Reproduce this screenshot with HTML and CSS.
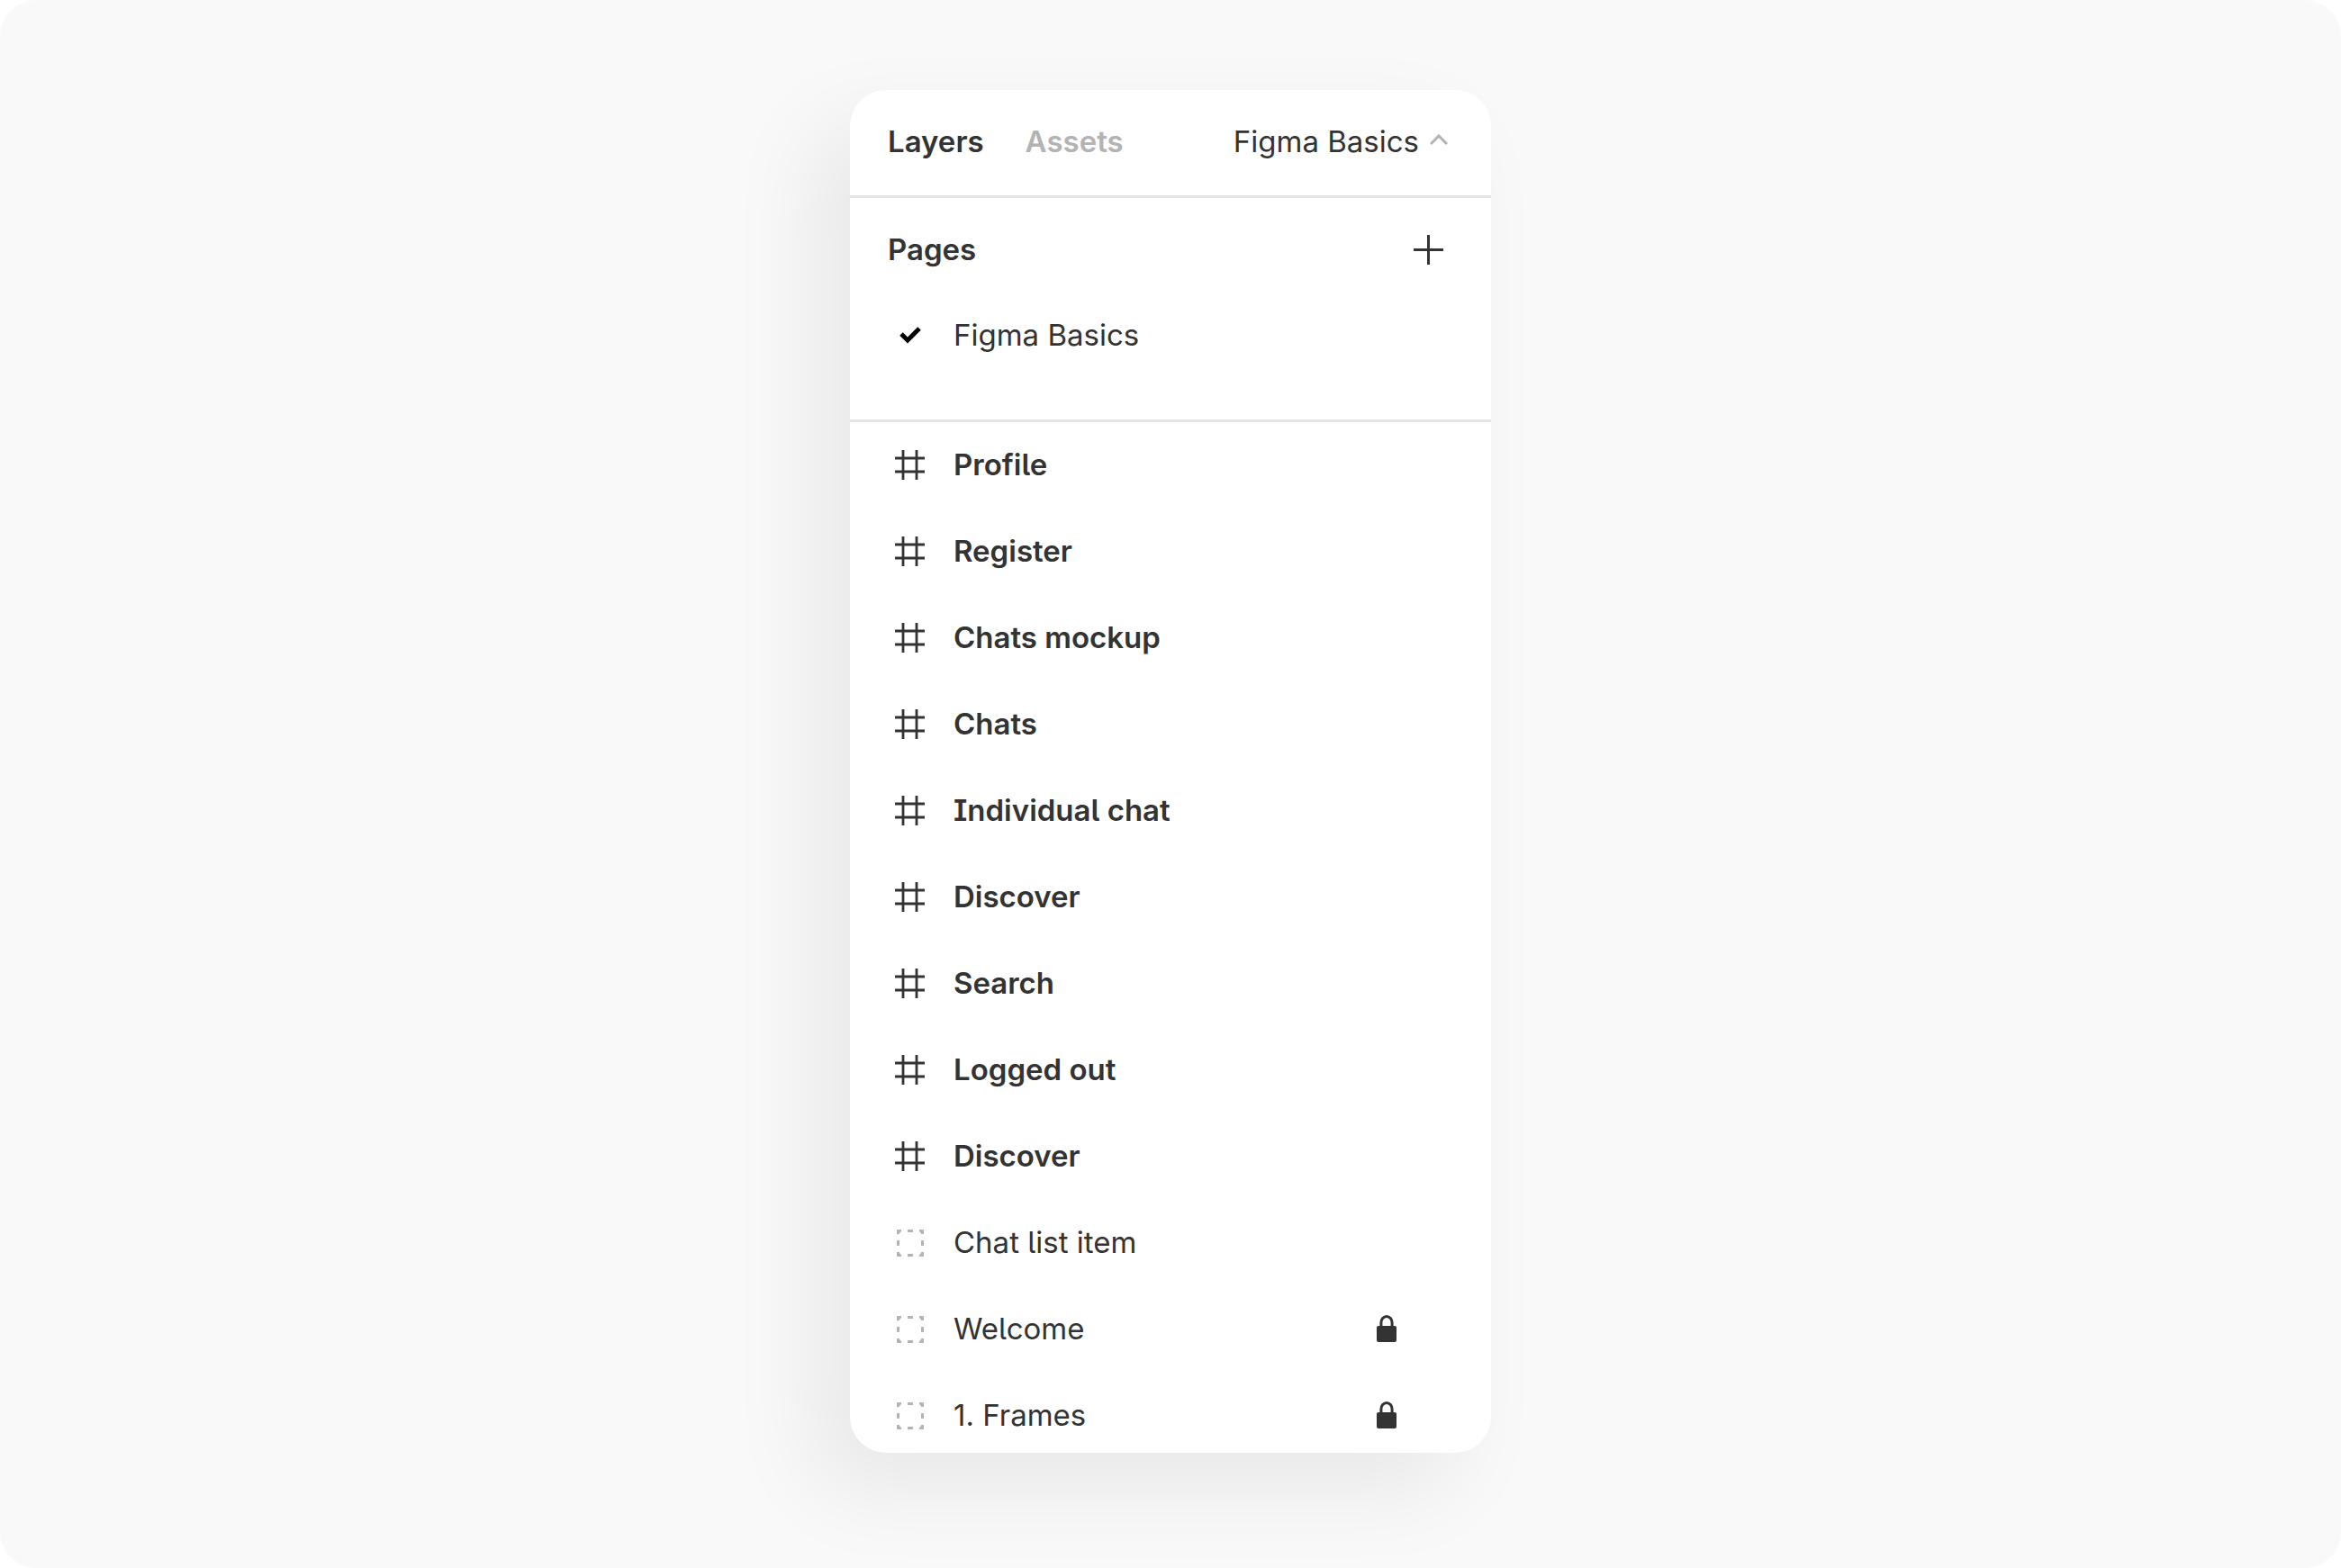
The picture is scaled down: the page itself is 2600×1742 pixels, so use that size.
FILE: index.html
```html
<!DOCTYPE html>
<html lang="en">
<head>
<meta charset="utf-8">
<title>Layers panel</title>
<link rel="stylesheet" href="styles.css">
</head>
<body>
<svg class="sprite" aria-hidden="true">
  <symbol id="frame" viewBox="0 0 33 33"><path d="M9 0v33M24 0v33M0 9h33M0 24h33" fill="none" stroke="currentColor" stroke-width="2.800"/></symbol>
  <symbol id="group" viewBox="0 0 33 33"><path d="M2 2h5v2l-2 2v1H2zM32 2h-5v2l2 2v1h3zM2 32h5v-2l-2-2v-1H2zM32 32h-5v-2l2-2v-1h3zM14 2h6v3h-6zM14 29h6v3h-6zM2 14h3v6H2zM29 14h3v6h-3z" fill="currentColor"/></symbol>
  <symbol id="check" viewBox="0 0 33 33"><path d="M7 15l7 7L27 9" fill="none" stroke="currentColor" stroke-width="5"/></symbol>
  <symbol id="lock" viewBox="0 0 22 30"><path d="M4.900 14V8.500a6.100 7 0 0 1 12.200 0V14" fill="none" stroke="currentColor" stroke-width="3"/><rect y="12" width="22" height="18" rx="2" fill="currentColor"/></symbol>
</svg>
<main class="stage">
  <section class="panel" aria-label="Layers panel">
    <header class="header">
      <button class="tab tab-active" type="button">Layers</button>
      <button class="tab" type="button">Assets</button>
      <button class="page-toggle" type="button">Figma Basics
        <svg class="chevron" viewBox="0 0 20 16" aria-hidden="true"><path d="M1 11l9-9 9 9" fill="none" stroke="currentColor" stroke-width="3"/></svg>
      </button>
    </header>
    <section class="pages">
      <div class="pages-head">
        <h2 class="title">Pages</h2>
        <button class="add" type="button" aria-label="Add page">
          <svg class="icon" viewBox="0 0 33 33" aria-hidden="true"><path d="M16.500 0v33M0 16.500h33" fill="none" stroke="currentColor" stroke-width="3"/></svg>
        </button>
      </div>
      <ul class="list">
        <li class="row"><svg class="icon icon-check"><use href="#check"/></svg><span>Figma Basics</span></li>
      </ul>
    </section>
    <ul class="list layers">
      <li class="row row-frame"><svg class="icon"><use href="#frame"/></svg><span>Profile</span></li>
      <li class="row row-frame"><svg class="icon"><use href="#frame"/></svg><span>Register</span></li>
      <li class="row row-frame"><svg class="icon"><use href="#frame"/></svg><span>Chats mockup</span></li>
      <li class="row row-frame"><svg class="icon"><use href="#frame"/></svg><span>Chats</span></li>
      <li class="row row-frame"><svg class="icon"><use href="#frame"/></svg><span>Individual chat</span></li>
      <li class="row row-frame"><svg class="icon"><use href="#frame"/></svg><span>Discover</span></li>
      <li class="row row-frame"><svg class="icon"><use href="#frame"/></svg><span>Search</span></li>
      <li class="row row-frame"><svg class="icon"><use href="#frame"/></svg><span>Logged out</span></li>
      <li class="row row-frame"><svg class="icon"><use href="#frame"/></svg><span>Discover</span></li>
      <li class="row"><svg class="icon icon-group"><use href="#group"/></svg><span>Chat list item</span></li>
      <li class="row"><svg class="icon icon-group"><use href="#group"/></svg><span>Welcome</span><button class="lock" type="button" aria-label="Unlock Welcome"><svg class="lock-icon"><use href="#lock"/></svg></button></li>
      <li class="row"><svg class="icon icon-group"><use href="#group"/></svg><span>1. Frames</span><button class="lock" type="button" aria-label="Unlock 1. Frames"><svg class="lock-icon"><use href="#lock"/></svg></button></li>
    </ul>
  </section>
</main>
</body>
</html>
```
FILE: styles.css
```css
* {
  box-sizing: border-box;
}

body {
  margin: 0;
  background: #fff;
  color: #333;
  font: 400 33px/48px Inter, "Liberation Sans", sans-serif;
  font-feature-settings: "cv05", "cv08";
}

button {
  padding: 0;
  border: 0;
  background: none;
  color: inherit;
  font: inherit;
  font-feature-settings: inherit;
  cursor: pointer;
}

svg {
  display: block;
  flex: none;
}

.sprite {
  position: absolute;
  width: 0;
  height: 0;
}

.stage {
  display: flex;
  justify-content: center;
  min-height: 100vh;
  padding: 100px 24px 128px;
  border-radius: 40px;
  background: #f9f9f9;
}

.panel {
  display: flex;
  flex-direction: column;
  width: 100%;
  max-width: 712px;
  max-height: calc(100vh - 228px);
  overflow: hidden;
  border-radius: 40px;
  background: #fff;
  box-shadow: -40px 40px 100px rgba(0, 0, 0, 0.07);
}

.header {
  display: flex;
  flex: none;
  align-items: center;
  gap: 46px;
  padding: 33px 48px 36px 42px;
  border-bottom: 3px solid #e5e5e5;
}

.tab {
  color: #b3b3b3;
  font-weight: 600;
}

.tab-active {
  color: #333;
}

.page-toggle {
  display: flex;
  align-items: center;
  gap: 12px;
  margin-left: auto;
}

.chevron {
  width: 20px;
  height: 16px;
  color: #b3b3b3;
}

.pages {
  flex: none;
  padding: 9px 0 45px;
  border-bottom: 3px solid #e5e5e5;
}

.pages-head {
  display: flex;
  align-items: center;
  justify-content: space-between;
  height: 96px;
  padding: 0 53px 0 42px;
}

.title {
  margin: 0;
  font-size: inherit;
  font-weight: 600;
}

.list {
  margin: 0;
  padding: 0;
  list-style: none;
}

.layers {
  min-height: 0;
  overflow: hidden;
}

.row {
  display: flex;
  align-items: center;
  gap: 32px;
  height: 96px;
  padding: 0 105px 2px 50px;
}

.row-frame {
  font-weight: 600;
}

.icon {
  width: 33px;
  height: 33px;
}

.icon-check {
  color: #000;
}

.icon-group {
  color: #b3b3b3;
}

.lock {
  margin-left: auto;
}

.lock-icon {
  width: 22px;
  height: 30px;
}
```
